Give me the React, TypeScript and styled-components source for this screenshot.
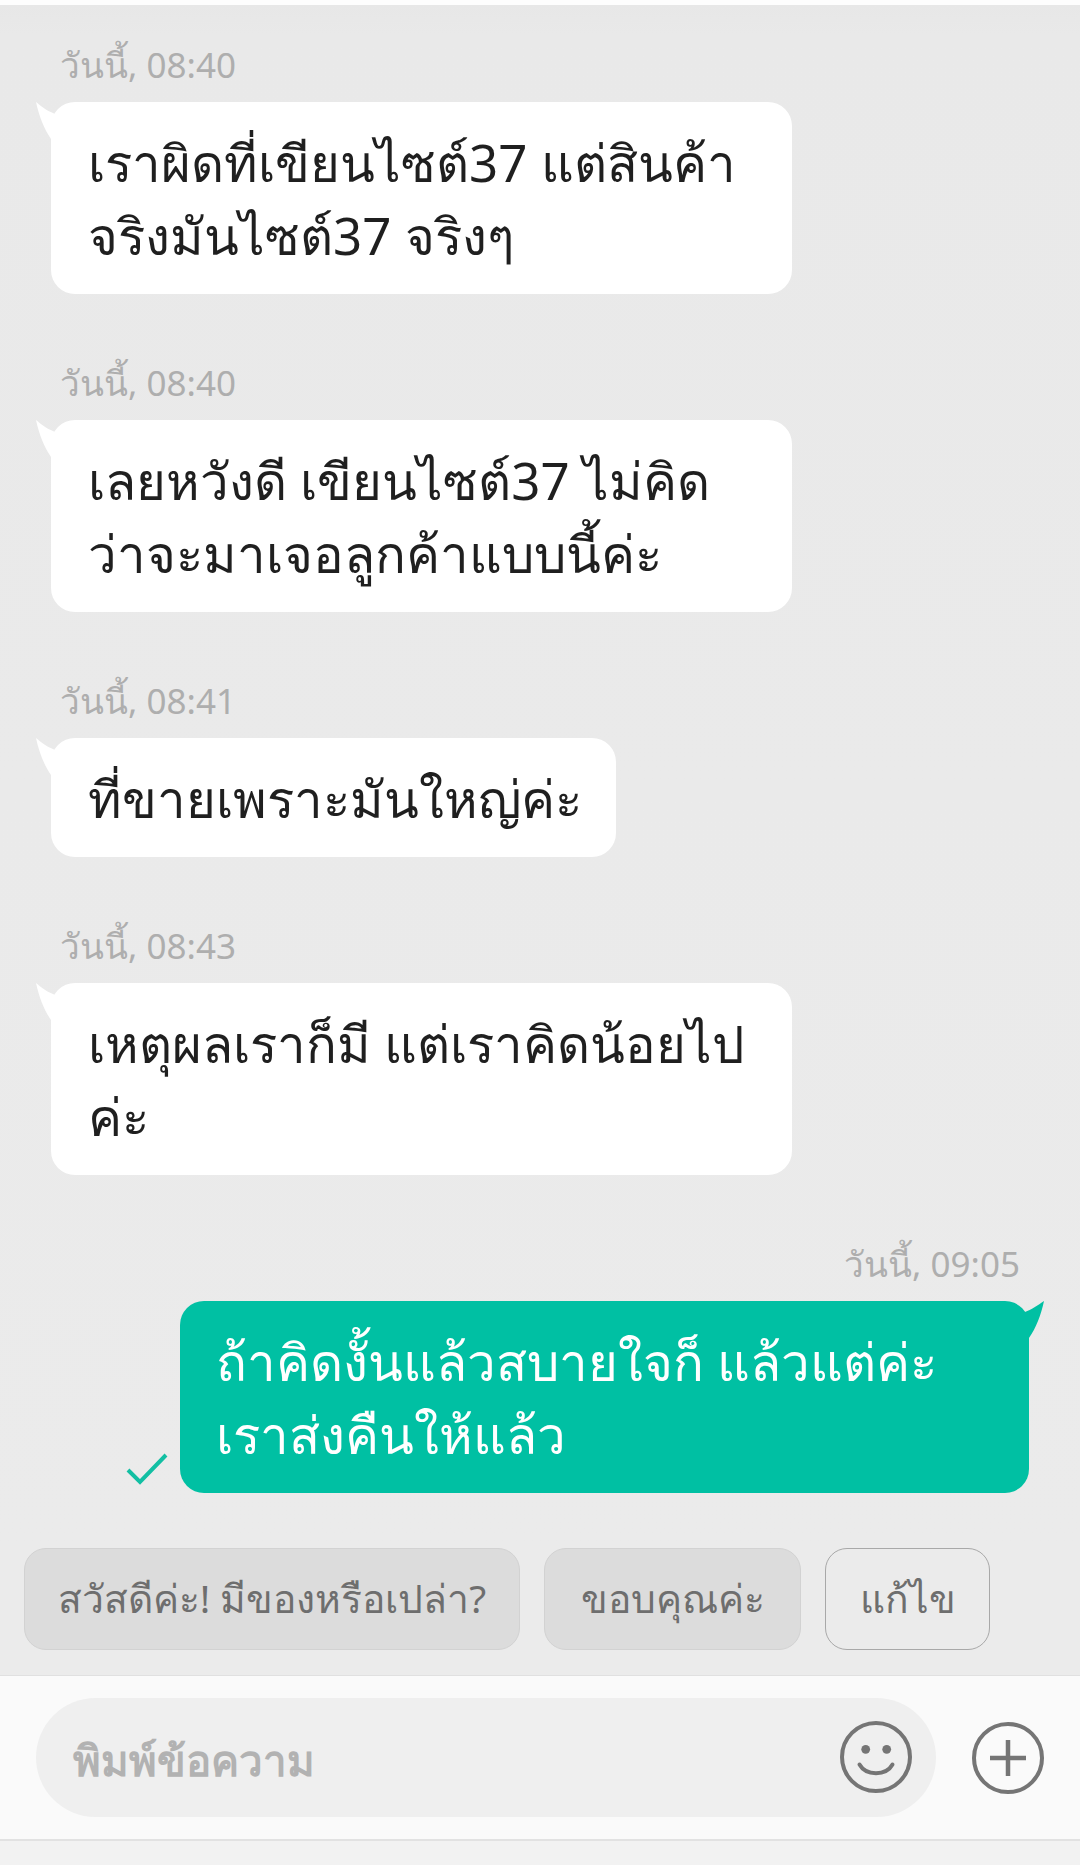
import styled, { createGlobalStyle } from "styled-components";

const GlobalStyle = createGlobalStyle`
  html, body {
    margin: 0;
    padding: 0;
    background: #ebebeb;
  }
  body {
    font-family: "Noto Sans", "Liberation Sans", "DejaVu Sans", sans-serif;
  }
`;

const incoming = [
  { time: "วันนี้, 08:40", lines: ["เราผิดที่เขียนไซต์37 แต่สินค้า", "จริงมันไซต์37 จริงๆ"], wide: true },
  { time: "วันนี้, 08:40", lines: ["เลยหวังดี เขียนไซต์37 ไม่คิด", "ว่าจะมาเจอลูกค้าแบบนี้ค่ะ"], wide: true },
  { time: "วันนี้, 08:41", lines: ["ที่ขายเพราะมันใหญ่ค่ะ"], wide: false },
  { time: "วันนี้, 08:43", lines: ["เหตุผลเราก็มี แต่เราคิดน้อยไป", "ค่ะ"], wide: true },
];

export default function App() {
  return (
    <Page>
      <GlobalStyle />
      <TopStrip />
      <Messages>
        {incoming.map((m, i) => (
          <Group key={i}>
            <Time>{m.time}</Time>
            <InBubble $wide={m.wide}>
              <InTail viewBox="0 0 32 38" aria-hidden>
                <path d="M1 0C6 4 12 9 18 11L20 12L32 37H16C9 27 4 14 1 0Z" />
              </InTail>
              {m.lines.map((l) => (
                <Line key={l}>{l}</Line>
              ))}
            </InBubble>
          </Group>
        ))}
        <OutGroup>
          <OutTime>วันนี้, 09:05</OutTime>
          <OutRow>
            <Check viewBox="0 0 42 32" aria-hidden>
              <path d="M2 17L14 29L40 2" />
            </Check>
            <OutBubble>
              <OutTail viewBox="0 0 32 38" aria-hidden>
                <path d="M31 0C25 4 18 9 12 11L10 12L0 37H16C23 27 28 14 31 0Z" />
              </OutTail>
              <Line>ถ้าคิดงั้นแล้วสบายใจก็ แล้วแต่ค่ะ</Line>
              <Line>เราส่งคืนให้แล้ว</Line>
            </OutBubble>
          </OutRow>
        </OutGroup>
      </Messages>
      <QuickReplies>
        <Reply $w={496}>สวัสดีค่ะ! มีของหรือเปล่า?</Reply>
        <Reply $w={257}>ขอบคุณค่ะ</Reply>
        <EditReply>แก้ไข</EditReply>
      </QuickReplies>
      <InputBar>
        <InputPill>
          <Placeholder>พิมพ์ข้อความ</Placeholder>
          <Icon viewBox="0 0 72 72" aria-hidden>
            <circle cx="36" cy="36" r="34" fill="none" strokeWidth="4" />
            <circle cx="25.7" cy="28.3" r="4.4" stroke="none" fill="#757575" />
            <circle cx="46.7" cy="28.3" r="4.4" stroke="none" fill="#757575" />
            <path d="M19.5 43.5C26 55 46 55 52.5 43.5" fill="none" strokeWidth="4" strokeLinecap="round" />
          </Icon>
        </InputPill>
        <PlusIcon viewBox="0 0 72 72" aria-hidden>
          <circle cx="36" cy="36" r="34" fill="none" strokeWidth="4" />
          <path d="M18 36H54M36 18V54" fill="none" strokeWidth="4.5" />
        </PlusIcon>
      </InputBar>
      <BottomBar />
    </Page>
  );
}

const Page = styled.div`
  width: 1080px;
  height: 1865px;
  display: flex;
  flex-direction: column;
  overflow: hidden;
  background: #ebebeb;
`;

const TopStrip = styled.div`
  height: 5px;
  background: #fdfdfd;
`;

const Messages = styled.div`
  flex: 1;
  display: flex;
  flex-direction: column;
  gap: 29px;
  padding: 0 51px;
  background: linear-gradient(#e7e7e7, #e9e9e9 30px, #ebebeb);
`;

const Group = styled.div`
  display: flex;
  flex-direction: column;
  align-items: flex-start;
`;

const Time = styled.div`
  height: 97px;
  padding: 36px 0 0 9px;
  box-sizing: border-box;
  font-size: 35px;
  line-height: 48px;
  color: #aeaeae;
  white-space: nowrap;
`;

const InBubble = styled.div<{ $wide: boolean }>`
  position: relative;
  box-sizing: border-box;
  width: ${({ $wide }) => ($wide ? "741px" : "565px")};
  padding: 24px 37px 22px;
  background: #ffffff;
  border-radius: 24px;
  color: #1f1f1f;
`;

const InTail = styled.svg`
  position: absolute;
  left: -16px;
  top: 0;
  width: 32px;
  height: 38px;
  fill: #ffffff;
`;

const Line = styled.div`
  font-size: 51px;
  line-height: 73px;
  white-space: nowrap;
`;

const OutGroup = styled(Group)`
  align-items: flex-end;
`;

const OutTime = styled(Time)`
  padding: 36px 9px 0 0;
`;

const OutRow = styled.div`
  display: flex;
  align-items: flex-end;
  gap: 12px;
`;

const Check = styled.svg`
  width: 42px;
  height: 32px;
  margin-bottom: 8px;
  fill: none;
  stroke: #12bfa3;
  stroke-width: 4;
`;

const OutBubble = styled.div`
  position: relative;
  box-sizing: border-box;
  width: 849px;
  padding: 24px 36px 22px;
  background: #00c0a3;
  border-radius: 24px;
  color: #ffffff;
`;

const OutTail = styled.svg`
  position: absolute;
  right: -16px;
  top: 0;
  width: 32px;
  height: 38px;
  fill: #00c0a3;
`;

const QuickReplies = styled.div`
  display: flex;
  gap: 24px;
  padding: 0 24px 25px;
`;

const Reply = styled.div<{ $w?: number }>`
  box-sizing: border-box;
  width: ${({ $w }) => $w}px;
  height: 102px;
  display: flex;
  align-items: center;
  justify-content: center;
  background: #dcdcdc;
  border: 1px solid #d2d2d2;
  border-radius: 22px;
  font-size: 39px;
  color: #6e6e6e;
  white-space: nowrap;
`;

const EditReply = styled(Reply)`
  width: 165px;
  background: transparent;
  border-color: #a8a8a8;
`;

const InputBar = styled.div`
  height: 166px;
  box-sizing: border-box;
  display: flex;
  align-items: flex-start;
  padding: 22px 0 0 36px;
  background: #fafafa;
  border-top: 1px solid #e0e0e0;
  border-bottom: 2px solid #e2e2e2;
`;

const InputPill = styled.div`
  box-sizing: border-box;
  width: 900px;
  height: 119px;
  display: flex;
  align-items: center;
  justify-content: space-between;
  padding: 0 24px 0 37px;
  background: #efefef;
  border-radius: 60px;
`;

const Placeholder = styled.div`
  font-size: 42px;
  font-weight: 700;
  color: #b2b2b2;
  padding-top: 6px;
`;

const Icon = styled.svg`
  width: 72px;
  height: 72px;
  margin-bottom: 1px;
  stroke: #757575;
`;

const PlusIcon = styled(Icon)`
  margin: 24px 0 0 36px;
`;

const BottomBar = styled.div`
  height: 24px;
  background: #f2f2f2;
`;
